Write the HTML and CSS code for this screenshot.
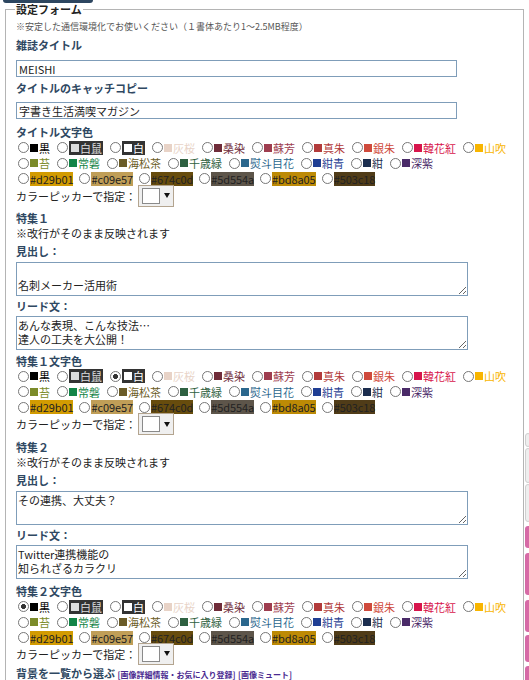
FILE: index.html
```html
<!DOCTYPE html>
<html lang="ja">
<head>
<meta charset="utf-8">
<title>設定フォーム</title>
<link rel="stylesheet" href="styles.css">
</head>
<body>
<div class="main">
  <div class="tab"></div>
  <fieldset class="form">
    <legend>設定フォーム</legend>
    <p class="note">※安定した通信環境化でお使いください（１書体あたり1〜2.5MB程度）</p>

    <div class="lbl mt3">雑誌タイトル</div>
    <input class="txt mt7" type="text" value="MEISHI">
    <div class="lbl mt3">タイトルのキャッチコピー</div>
    <input class="txt mt6" type="text" value="字書き生活満喫マガジン">

    <div class="lbl mt5">タイトル文字色</div>
    <div class="colors">
      <label class="opt kuro"><input type="radio" name="c0"><i class="sw"></i><span class="t">黒</span></label>
      <label class="opt shironezumi boxed"><input type="radio" name="c0"><span class="t"><i class="sw"></i>白鼠</span></label>
      <label class="opt shiro boxed"><input type="radio" name="c0"><span class="t"><i class="sw"></i>白</span></label>
      <label class="opt haizakura"><input type="radio" name="c0"><i class="sw"></i><span class="t">灰桜</span></label>
      <label class="opt kuwazome"><input type="radio" name="c0"><i class="sw"></i><span class="t">桑染</span></label>
      <label class="opt suou"><input type="radio" name="c0"><i class="sw"></i><span class="t">蘇芳</span></label>
      <label class="opt shinshu"><input type="radio" name="c0"><i class="sw"></i><span class="t">真朱</span></label>
      <label class="opt ginshu"><input type="radio" name="c0"><i class="sw"></i><span class="t">銀朱</span></label>
      <label class="opt karakurenai"><input type="radio" name="c0"><i class="sw"></i><span class="t">韓花紅</span></label>
      <label class="opt yamabuki"><input type="radio" name="c0"><i class="sw"></i><span class="t">山吹</span></label>
      <span class="brk"></span>
      <label class="opt koke"><input type="radio" name="c0"><i class="sw"></i><span class="t">苔</span></label>
      <label class="opt tokiwa"><input type="radio" name="c0"><i class="sw"></i><span class="t">常磐</span></label>
      <label class="opt mirucha"><input type="radio" name="c0"><i class="sw"></i><span class="t">海松茶</span></label>
      <label class="opt chitose"><input type="radio" name="c0"><i class="sw"></i><span class="t">千歳緑</span></label>
      <label class="opt noshime"><input type="radio" name="c0"><i class="sw"></i><span class="t">熨斗目花</span></label>
      <label class="opt konjo"><input type="radio" name="c0"><i class="sw"></i><span class="t">紺青</span></label>
      <label class="opt kon"><input type="radio" name="c0"><i class="sw"></i><span class="t">紺</span></label>
      <label class="opt fukamurasaki"><input type="radio" name="c0"><i class="sw"></i><span class="t">深紫</span></label>
      <span class="brk"></span>
      <label class="opt hex h1"><input type="radio" name="c0"><span class="t">#d29b01</span></label>
      <label class="opt hex h2"><input type="radio" name="c0"><span class="t">#c09e57</span></label>
      <label class="opt hex h3"><input type="radio" name="c0"><span class="t">#674c0d</span></label>
      <label class="opt hex h4"><input type="radio" name="c0"><span class="t">#5d554a</span></label>
      <label class="opt hex h5"><input type="radio" name="c0"><span class="t">#bd8a05</span></label>
      <label class="opt hex h6"><input type="radio" name="c0"><span class="t">#503c18</span></label>
    </div>
    <div class="picker"><span>カラーピッカーで指定：</span><span class="pick"><span class="pick-sw"></span><span class="pick-arrow"></span></span></div>

    <div class="lbl mt3">特集１</div>
    <p class="plain">※改行がそのまま反映されます</p>
    <div class="lbl mt3">見出し：</div>
    <textarea class="area mt3">

名刺メーカー活用術</textarea>
    <div class="lbl mt2">リード文：</div>
    <textarea class="area mt2">あんな表現、こんな技法…
達人の工夫を大公開！</textarea>

    <div class="lbl mt3">特集１文字色</div>
    <div class="colors">
      <label class="opt kuro"><input type="radio" name="c1"><i class="sw"></i><span class="t">黒</span></label>
      <label class="opt shironezumi boxed"><input type="radio" name="c1"><span class="t"><i class="sw"></i>白鼠</span></label>
      <label class="opt shiro boxed"><input type="radio" name="c1" checked><span class="t"><i class="sw"></i>白</span></label>
      <label class="opt haizakura"><input type="radio" name="c1"><i class="sw"></i><span class="t">灰桜</span></label>
      <label class="opt kuwazome"><input type="radio" name="c1"><i class="sw"></i><span class="t">桑染</span></label>
      <label class="opt suou"><input type="radio" name="c1"><i class="sw"></i><span class="t">蘇芳</span></label>
      <label class="opt shinshu"><input type="radio" name="c1"><i class="sw"></i><span class="t">真朱</span></label>
      <label class="opt ginshu"><input type="radio" name="c1"><i class="sw"></i><span class="t">銀朱</span></label>
      <label class="opt karakurenai"><input type="radio" name="c1"><i class="sw"></i><span class="t">韓花紅</span></label>
      <label class="opt yamabuki"><input type="radio" name="c1"><i class="sw"></i><span class="t">山吹</span></label>
      <span class="brk"></span>
      <label class="opt koke"><input type="radio" name="c1"><i class="sw"></i><span class="t">苔</span></label>
      <label class="opt tokiwa"><input type="radio" name="c1"><i class="sw"></i><span class="t">常磐</span></label>
      <label class="opt mirucha"><input type="radio" name="c1"><i class="sw"></i><span class="t">海松茶</span></label>
      <label class="opt chitose"><input type="radio" name="c1"><i class="sw"></i><span class="t">千歳緑</span></label>
      <label class="opt noshime"><input type="radio" name="c1"><i class="sw"></i><span class="t">熨斗目花</span></label>
      <label class="opt konjo"><input type="radio" name="c1"><i class="sw"></i><span class="t">紺青</span></label>
      <label class="opt kon"><input type="radio" name="c1"><i class="sw"></i><span class="t">紺</span></label>
      <label class="opt fukamurasaki"><input type="radio" name="c1"><i class="sw"></i><span class="t">深紫</span></label>
      <span class="brk"></span>
      <label class="opt hex h1"><input type="radio" name="c1"><span class="t">#d29b01</span></label>
      <label class="opt hex h2"><input type="radio" name="c1"><span class="t">#c09e57</span></label>
      <label class="opt hex h3"><input type="radio" name="c1"><span class="t">#674c0d</span></label>
      <label class="opt hex h4"><input type="radio" name="c1"><span class="t">#5d554a</span></label>
      <label class="opt hex h5"><input type="radio" name="c1"><span class="t">#bd8a05</span></label>
      <label class="opt hex h6"><input type="radio" name="c1"><span class="t">#503c18</span></label>
    </div>
    <div class="picker"><span>カラーピッカーで指定：</span><span class="pick"><span class="pick-sw"></span><span class="pick-arrow"></span></span></div>

    <div class="lbl mt4">特集２</div>
    <p class="plain">※改行がそのまま反映されます</p>
    <div class="lbl mt3">見出し：</div>
    <textarea class="area mt3">その連携、大丈夫？</textarea>
    <div class="lbl mt2">リード文：</div>
    <textarea class="area mt2">Twitter連携機能の
知られざるカラクリ</textarea>

    <div class="lbl mt4">特集２文字色</div>
    <div class="colors">
      <label class="opt kuro"><input type="radio" name="c2" checked><i class="sw"></i><span class="t">黒</span></label>
      <label class="opt shironezumi boxed"><input type="radio" name="c2"><span class="t"><i class="sw"></i>白鼠</span></label>
      <label class="opt shiro boxed"><input type="radio" name="c2"><span class="t"><i class="sw"></i>白</span></label>
      <label class="opt haizakura"><input type="radio" name="c2"><i class="sw"></i><span class="t">灰桜</span></label>
      <label class="opt kuwazome"><input type="radio" name="c2"><i class="sw"></i><span class="t">桑染</span></label>
      <label class="opt suou"><input type="radio" name="c2"><i class="sw"></i><span class="t">蘇芳</span></label>
      <label class="opt shinshu"><input type="radio" name="c2"><i class="sw"></i><span class="t">真朱</span></label>
      <label class="opt ginshu"><input type="radio" name="c2"><i class="sw"></i><span class="t">銀朱</span></label>
      <label class="opt karakurenai"><input type="radio" name="c2"><i class="sw"></i><span class="t">韓花紅</span></label>
      <label class="opt yamabuki"><input type="radio" name="c2"><i class="sw"></i><span class="t">山吹</span></label>
      <span class="brk"></span>
      <label class="opt koke"><input type="radio" name="c2"><i class="sw"></i><span class="t">苔</span></label>
      <label class="opt tokiwa"><input type="radio" name="c2"><i class="sw"></i><span class="t">常磐</span></label>
      <label class="opt mirucha"><input type="radio" name="c2"><i class="sw"></i><span class="t">海松茶</span></label>
      <label class="opt chitose"><input type="radio" name="c2"><i class="sw"></i><span class="t">千歳緑</span></label>
      <label class="opt noshime"><input type="radio" name="c2"><i class="sw"></i><span class="t">熨斗目花</span></label>
      <label class="opt konjo"><input type="radio" name="c2"><i class="sw"></i><span class="t">紺青</span></label>
      <label class="opt kon"><input type="radio" name="c2"><i class="sw"></i><span class="t">紺</span></label>
      <label class="opt fukamurasaki"><input type="radio" name="c2"><i class="sw"></i><span class="t">深紫</span></label>
      <span class="brk"></span>
      <label class="opt hex h1"><input type="radio" name="c2"><span class="t">#d29b01</span></label>
      <label class="opt hex h2"><input type="radio" name="c2"><span class="t">#c09e57</span></label>
      <label class="opt hex h3"><input type="radio" name="c2"><span class="t">#674c0d</span></label>
      <label class="opt hex h4"><input type="radio" name="c2"><span class="t">#5d554a</span></label>
      <label class="opt hex h5"><input type="radio" name="c2"><span class="t">#bd8a05</span></label>
      <label class="opt hex h6"><input type="radio" name="c2"><span class="t">#503c18</span></label>
    </div>
    <div class="picker last"><span>カラーピッカーで指定：</span><span class="pick"><span class="pick-sw"></span><span class="pick-arrow"></span></span></div>

    <div class="lbl">背景を一覧から選ぶ <a class="sub" href="#">[画像詳細情報・お気に入り登録]</a> <a class="sub" href="#">[画像ミュート]</a></div>
  </fieldset>
</div>
<div class="side">
  <span class="sbtn gray g1"></span>
  <span class="sbtn gray g2"></span>
  <span class="sbtn gray g3"></span>
  <span class="sbtn pink p1"></span>
  <span class="sbtn pink p2"></span>
  <span class="sbtn pink p3"></span>
  <span class="sbtn pink p4"></span>
  <span class="sbtn pink p5"></span>
</div>
</body>
</html>
```
FILE: styles.css
```css
* { box-sizing: border-box; }
html, body { margin: 0; padding: 0; }
body {
  width: 529px;
  height: 680px;
  overflow: hidden;
  display: flex;
  align-items: flex-start;
  font-family: "Noto Sans CJK JP", "Noto Sans", sans-serif;
  font-size: 11px;
  color: #222;
  background: #fff;
}
.main { width: 524px; flex: none; }
.tab {
  width: 90px;
  height: 3px;
  margin-left: 3px;
  background: #2d4660;
  border-radius: 0 0 3px 3px;
}
.form {
  margin: 0 0 0 5px;
  width: 519px;
  min-width: 0;
  padding: 4px 10px 10px;
  border: 1px solid #b4b4b4;
}
.form legend {
  font-weight: bold;
  font-size: 11px;
  line-height: 13px;
  padding: 0 1px;
  margin-left: -1px;
  color: #222;
}
.note { margin: 0; font-size: 9px; line-height: 14px; color: #555; }
.plain { margin: 0; line-height: 14px; color: #222; }
.lbl { font-weight: bold; line-height: 16px; color: #2f4862; }
.mt1 { margin-top: 1px; }
.mt2 { margin-top: 2px; }
.mt3 { margin-top: 3px; }
.mt4 { margin-top: 4px; }
.mt5 { margin-top: 5px; }
.mt6 { margin-top: 6px; }
.mt7 { margin-top: 7px; }

.txt {
  display: block;
  width: 441px;
  height: 17px;
  padding: 0 2px;
  border: 1px solid #7f9db9;
  font-family: inherit;
  font-size: 11px;
  color: #222;
  background: #fff;
  outline: none;
}
.area {
  display: block;
  width: 452px;
  height: 34px;
  padding: 1px;
  border: 1px solid #7f9db9;
  font-family: inherit;
  font-size: 11px;
  line-height: 14px;
  color: #222;
  background: #fff;
  resize: vertical;
  overflow: hidden;
  outline: none;
}

.colors {
  display: flex;
  flex-wrap: wrap;
  line-height: 14px;
}
.brk { flex-basis: 100%; height: 0; }
.opt {
  display: flex;
  align-items: center;
  height: 15.5px;
  margin-right: 5px;
  white-space: nowrap;
}
.opt input {
  appearance: none;
  -webkit-appearance: none;
  width: 11px;
  height: 11px;
  margin: 0 1px 0 2px;
  border: 1px solid #777;
  border-radius: 50%;
  background: #fff;
  flex: none;
}
.opt input:checked {
  background: radial-gradient(circle, #333 0 2.2px, #fff 2.8px);
}
.sw {
  display: inline-block;
  width: 8px;
  height: 8px;
  margin-right: 1px;
  background: var(--c);
  flex: none;
}
.opt .t { color: var(--c); }
.boxed .t {
  display: flex;
  align-items: center;
  background: #333;
  padding: 0 1px 0 2px;
  height: 14px;
}
.hex { margin-right: 4px; }
.hex .t {
  background: var(--c);
  color: #222;
  padding: 0;
  letter-spacing: -0.1px;
  height: 14px;
}

.kuro { --c: #000; }
.shironezumi { --c: #dcdddd; }
.shiro { --c: #fff; }
.haizakura { --c: #e8d3c7; }
.kuwazome { --c: #6f2c39; }
.suou { --c: #9e3d4f; }
.shinshu { --c: #b23b3b; }
.ginshu { --c: #cf4a3c; }
.karakurenai { --c: #d7154c; }
.yamabuki { --c: #f8b500; }
.koke { --c: #7b8b2a; }
.tokiwa { --c: #128447; }
.mirucha { --c: #6b5c27; }
.chitose { --c: #2f6141; }
.noshime { --c: #2b678d; }
.konjo { --c: #1f3e93; }
.kon { --c: #1b2d4e; }
.fukamurasaki { --c: #4a2a68; }
.h1 { --c: #d29b01; }
.h2 { --c: #c09e57; }
.h3 { --c: #674c0d; }
.h4 { --c: #5d554a; }
.h5 { --c: #bd8a05; }
.h6 { --c: #503c18; }

.picker {
  display: flex;
  align-items: center;
  height: 22px;
  margin-top: -2px;
  line-height: 14px;
}
.picker.last { margin-top: -3px; }
.pick {
  display: flex;
  align-items: center;
  width: 36px;
  height: 22px;
  margin-left: 2px;
  padding: 0 3px;
  border: 1px solid #b3a48f;
  background: #efefef;
}
.pick-sw {
  width: 18px;
  height: 16px;
  border: 1px solid #8a8a8a;
  background: #fff;
}
.pick-arrow {
  margin-left: 4px;
  border-left: 3px solid transparent;
  border-right: 3px solid transparent;
  border-top: 5px solid #111;
}

.sub {
  font-size: 8px;
  color: #4a2a90;
  text-decoration: none;
}

.side {
  flex: none;
  width: 6px;
  margin-left: 1px;
  padding-top: 433px;
  display: flex;
  flex-direction: column;
}
.sbtn { display: block; border-radius: 3px; }
.gray { background: #eeeeee; border: 1px solid #cfcfcf; }
.pink { background: #d66aa6; }
.g1 { height: 14px; }
.g2 { height: 35px; margin-top: 1px; }
.g3 { height: 38px; margin-top: 1px; }
.p1 { height: 22px; margin-top: 4px; }
.p2 { height: 42px; margin-top: 5px; }
.p3 { height: 32px; margin-top: 5px; }
.p4 { height: 27px; margin-top: 3px; }
.p5 { height: 30px; margin-top: 4px; }
```
